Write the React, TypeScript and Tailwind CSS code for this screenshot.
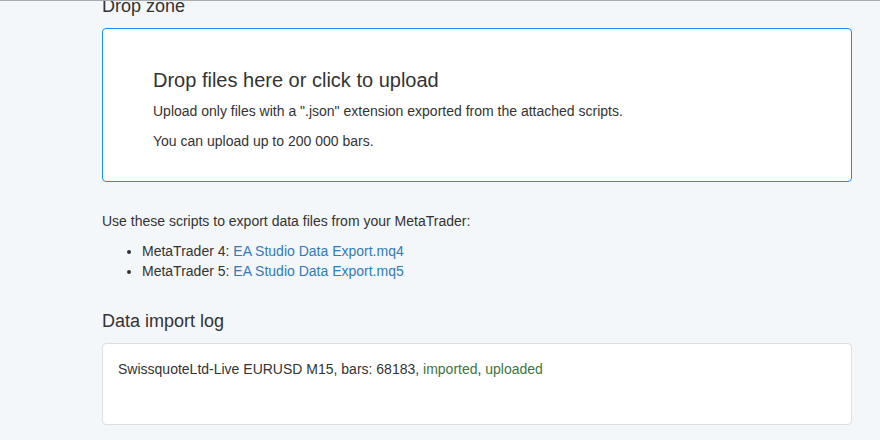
export default function App() {
  return (
    <div className="h-[440px] w-[880px] overflow-hidden border-t border-[#a9abae] bg-[#f4f7fa] font-['Liberation_Sans',Arial,sans-serif] text-[14px] leading-[20px] text-[#333]">
      <div className="ml-[102px] mr-[28px]">
        <h4 className="-mt-[5px] mb-[12px] text-[18px] leading-[20px]">Drop zone</h4>

        <div className="rounded-[4px] border border-[#1e8cf0] bg-white pl-[50px] pr-[50px] pt-[40px] pb-[30px]">
          <h3 className="text-[20px] leading-[22px]">Drop files here or click to upload</h3>
          <p className="mt-[10px]">Upload only files with a ".json" extension exported from the attached scripts.</p>
          <p className="mt-[10px]">You can upload up to 200 000 bars.</p>
        </div>

        <p className="mt-[29px]">Use these scripts to export data files from your MetaTrader:</p>
        <ul className="mt-[10px] list-disc pl-[40px]">
          <li>
            MetaTrader 4: <a href="#" className="text-[#337ab7]">EA Studio Data Export.mq4</a>
          </li>
          <li>
            MetaTrader 5: <a href="#" className="text-[#337ab7]">EA Studio Data Export.mq5</a>
          </li>
        </ul>

        <h4 className="mt-[30px] mb-[12px] text-[18px] leading-[20px]">Data import log</h4>
        <div className="h-[82px] rounded-[4px] border border-[#dcdfe3] bg-white px-[15px] pt-[15px]">
          SwissquoteLtd-Live EURUSD M15, bars: 68183,{" "}
          <span className="text-[#3c763d]">imported</span>,{" "}
          <span className="text-[#3c763d]">uploaded</span>
        </div>
      </div>
    </div>
  );
}
